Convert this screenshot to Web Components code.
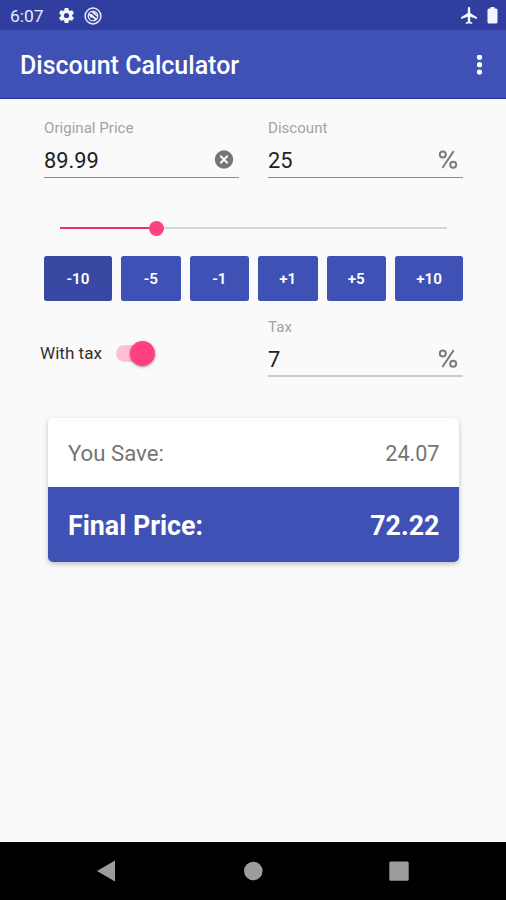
<!DOCTYPE html>
<html lang="en">
<head>
<meta charset="utf-8">
<title>Discount Calculator</title>
<style>
    body {
        margin: 0;
        background: #fafafa;
        font-family: Roboto, "Liberation Sans", sans-serif;
    }
</style>
</head>
<body>
<calculator-app></calculator-app>

<script>
class StatusBar extends HTMLElement {
    constructor() {
        super();
        this.attachShadow({mode: "open"}).innerHTML = `
        <style>
            :host {
                display: flex;
                align-items: center;
                box-sizing: border-box;
                height: 30px;
                padding: 1px 8px 0 10px;
                background: #303f9f;
                color: #e9ebf8;
                font-size: 17.4px;
            }
            svg { display: block; fill: #f4f5fd; }
            .gear { margin-left: 13px; }
            .ring { margin-left: 8.5px; }
            .plane { margin-left: auto; }
            .battery { margin-left: 10px; }
        </style>
        <span>6:07</span>
        <svg class="gear" width="19" height="19" viewBox="0 0 24 24"><path d="M19.14 12.94c.04-.3.06-.61.06-.94s-.02-.64-.07-.94l2.03-1.58c.18-.14.23-.41.12-.61l-1.92-3.32c-.12-.22-.37-.29-.59-.22l-2.39.96c-.5-.38-1.03-.7-1.62-.94l-.36-2.54c-.04-.24-.24-.41-.48-.41h-3.84c-.24 0-.43.17-.47.41l-.36 2.54c-.59.24-1.13.57-1.62.94l-2.39-.96c-.22-.08-.47 0-.59.22L2.74 8.87c-.12.21-.08.47.12.61l2.03 1.58c-.05.3-.09.63-.09.94s.02.64.07.94l-2.03 1.58c-.18.14-.23.41-.12.61l1.92 3.32c.12.22.37.29.59.22l2.39-.96c.5.38 1.03.7 1.62.94l.36 2.54c.05.24.24.41.48.41h3.84c.24 0 .44-.17.47-.41l.36-2.54c.59-.24 1.13-.56 1.62-.94l2.39.96c.22.08.47 0 .59-.22l1.92-3.32c.12-.22.07-.47-.12-.61l-2.01-1.58zM12 15.3a3.3 3.3 0 1 1 0-6.6 3.3 3.3 0 0 1 0 6.6z"/></svg>
        <svg class="ring" width="18" height="18" viewBox="0 0 18 18">
            <circle cx="9" cy="9" r="7.9" fill="none" stroke="#e9ebf8" stroke-width="1.5"/>
            <circle cx="9" cy="9" r="4.8" fill="none" stroke="#e9ebf8" stroke-width="1.3"/>
            <path d="M4.2 6.8 8 7.2l5.2 5.2-1.4 1.4-3.2-3.2-1.8.2z"/>
            <path d="M7 4.7h3l3 3v2z"/>
        </svg>
        <svg class="plane" width="16" height="17" viewBox="2 2 20 20" preserveAspectRatio="none"><path d="M22 16v-2l-8.5-5V3.5C13.5 2.67 12.83 2 12 2s-1.5.67-1.5 1.5V9L2 14v2l8.5-2.5V19L8 20.5V22l4-1 4 1v-1.5L13.5 19v-5.5z"/></svg>
        <svg class="battery" width="11" height="17" viewBox="0 0 11 17"><path d="M3.5 0h4v1.6H9q1.5 0 1.5 1.5V15q0 1.5-1.5 1.5H2Q.5 16.5.5 15V3.1Q.5 1.6 2 1.6h1.5z"/></svg>
        `;
    }
}

class AppBar extends HTMLElement {
    constructor() {
        super();
        this.attachShadow({mode: "open"}).innerHTML = `
        <style>
            :host {
                display: flex;
                align-items: center;
                justify-content: space-between;
                box-sizing: border-box;
                height: 69px;
                padding: 2px 23px 0 20px;
                background: #3f51b5;
                border-bottom: 1px solid #2135a4;
                color: #fff;
            }
            h1 { margin: 0; font-size: 25px; font-weight: 500; }
            svg { display: block; fill: #fff; }
        </style>
        <h1><slot></slot></h1>
        <svg width="7" height="21" viewBox="0 0 7 21">
            <circle cx="3.5" cy="2.3" r="2.6"/><circle cx="3.5" cy="9.7" r="2.6"/><circle cx="3.5" cy="17.1" r="2.6"/>
        </svg>
        `;
    }
}

class PriceField extends HTMLElement {
    constructor() {
        super();
        this.attachShadow({mode: "open"}).innerHTML = `
        <style>
            :host {
                display: block;
                width: 195px;
                height: 59px;
                color: #212121;
            }
            .label {
                height: 18px;
                line-height: 18px;
                font-size: 15.1px;
                color: #a3a3a3;
            }
            .row {
                display: flex;
                align-items: center;
                justify-content: space-between;
                box-sizing: border-box;
                height: 41px;
                padding: 5px 5px 0 0;
                border-bottom: 1px solid #8c8c8c;
                font-size: 21.8px;
            }
            .value { padding-top: 2px; }
            :host([disabled]) .row {
                padding-top: 6px;
                border-bottom: 2px solid #cacaca;
            }
        </style>
        <div class="label">${this.getAttribute("label")}</div>
        <div class="row"><span class="value">${this.getAttribute("value")}</span><slot></slot></div>
        `;
    }
}

class ClearIcon extends HTMLElement {
    constructor() {
        super();
        this.attachShadow({mode: "open"}).innerHTML = `
        <style>
            :host { display: block; }
            svg { display: block; }
        </style>
        <svg width="20" height="20" viewBox="0 0 20 20">
            <circle cx="10" cy="9.5" r="9.2" fill="#757575"/>
            <path d="M6.3 5.8l7.4 7.4M13.7 5.8l-7.4 7.4" stroke="#fafafa" stroke-width="2"/>
        </svg>
        `;
    }
}

class PercentIcon extends HTMLElement {
    constructor() {
        super();
        this.attachShadow({mode: "open"}).innerHTML = `
        <style>
            :host { display: block; }
            svg { display: block; fill: none; stroke: #7c7c7c; stroke-width: 2; }
        </style>
        <svg width="20" height="20" viewBox="0 0 20 20">
            <circle cx="4.8" cy="4.4" r="3"/>
            <circle cx="15.2" cy="14.7" r="3"/>
            <path d="M15.7 1.1 4.4 18"/>
        </svg>
        `;
    }
}

class DiscountSlider extends HTMLElement {
    constructor() {
        super();
        const value = this.getAttribute("value");
        this.attachShadow({mode: "open"}).innerHTML = `
        <style>
            :host { display: flex; align-items: center; height: 16px; }
            .filled { width: calc(${value}% - 7.5px); height: 2px; background: #e92f76; }
            .thumb { width: 15px; height: 15px; border-radius: 50%; background: #ff4081; }
            .rest { flex: 1; height: 2px; background: #d5d5d5; }
        </style>
        <div class="filled"></div><div class="thumb"></div><div class="rest"></div>
        `;
    }
}

class StepButton extends HTMLElement {
    constructor() {
        super();
        this.attachShadow({mode: "open"}).innerHTML = `
        <style>
            :host {
                display: flex;
                align-items: center;
                justify-content: center;
                flex: 1;
                box-sizing: border-box;
                height: 45px;
                padding-top: 1px;
                border-radius: 2.5px;
                background: #3f51b5;
                color: #fff;
                font-size: 15.2px;
                font-weight: 600;
            }
            :host([wide]) { flex: 0 0 68px; }
            :host([pressed]) { background: #3949a3; }
        </style>
        <slot></slot>
        `;
    }
}

class TaxSwitch extends HTMLElement {
    constructor() {
        super();
        this.attachShadow({mode: "open"}).innerHTML = `
        <style>
            :host {
                display: flex;
                align-items: center;
                color: #303030;
                font-size: 17.1px;
            }
            .track {
                display: flex;
                align-items: center;
                justify-content: flex-end;
                width: 36px;
                height: 17px;
                margin-left: 14.5px;
                border-radius: 9px;
                background: #ffbfd5;
            }
            .thumb {
                flex: none;
                width: 25px;
                height: 25px;
                margin-right: -2.5px;
                border-radius: 50%;
                background: #ff4081;
                box-shadow: 0 1px 3px rgba(0, 0, 0, 0.4);
            }
        </style>
        <span><slot></slot></span>
        <div class="track"><div class="thumb"></div></div>
        `;
    }
}

class ResultCard extends HTMLElement {
    constructor() {
        super();
        this.attachShadow({mode: "open"}).innerHTML = `
        <style>
            :host {
                display: block;
                border-radius: 5px;
                overflow: hidden;
                background: #fff;
                box-shadow: 0 2px 5px rgba(0, 0, 0, 0.24);
            }
            div {
                display: flex;
                align-items: center;
                justify-content: space-between;
                box-sizing: border-box;
                padding: 2px 19.5px 0 20px;
            }
            .save {
                height: 69px;
                padding-top: 1px;
                font-size: 22.2px;
                color: #757575;
            }
            .save .amount { font-size: 21.6px; }
            .final {
                height: 75px;
                padding-top: 3px;
                font-size: 26.8px;
                font-weight: 700;
                color: #fff;
                background: #3f51b5;
            }
        </style>
        <div class="save"><span>You Save:</span><span class="amount">${this.getAttribute("save")}</span></div>
        <div class="final"><span>Final Price:</span><span class="amount">${this.getAttribute("final")}</span></div>
        `;
    }
}

class NavBar extends HTMLElement {
    constructor() {
        super();
        this.attachShadow({mode: "open"}).innerHTML = `
        <style>
            :host {
                display: flex;
                align-items: center;
                justify-content: space-between;
                box-sizing: border-box;
                height: 58px;
                padding: 0 97px 0 96px;
                background: #000;
            }
            svg { display: block; fill: #9c9c9c; }
        </style>
        <svg width="20" height="22" viewBox="0 0 20 22"><path d="M1 11 19 .5v21z"/></svg>
        <svg width="20" height="20" viewBox="0 0 20 20"><circle cx="10.3" cy="10" r="9.3"/></svg>
        <svg width="20" height="20" viewBox="0 0 20 20"><rect x=".3" y=".5" width="19.4" height="19.2" rx="1.5"/></svg>
        `;
    }
}

class CalculatorApp extends HTMLElement {
    constructor() {
        super();
        this.attachShadow({mode: "open"}).innerHTML = `
        <style>
            :host {
                display: flex;
                flex-direction: column;
                height: 900px;
                overflow: hidden;
            }
            main { flex: 1; padding: 20px 43px 0 44px; }
            .fields { display: flex; justify-content: space-between; }
            discount-slider { margin: 42px 16px 0; }
            .steps { display: flex; gap: 9px; margin-top: 20px; }
            .tax { display: flex; justify-content: space-between; margin: 17px 0 0 -4px; }
            tax-switch { height: 70px; }
            result-card { margin: 30px 4px 0; }
        </style>
        <status-bar></status-bar>
        <app-bar>Discount Calculator</app-bar>
        <main>
            <div class="fields">
                <price-field label="Original Price" value="89.99"><clear-icon></clear-icon></price-field>
                <price-field label="Discount" value="25"><percent-icon></percent-icon></price-field>
            </div>
            <discount-slider value="25"></discount-slider>
            <div class="steps">
                <step-button wide pressed>-10</step-button>
                <step-button>-5</step-button>
                <step-button>-1</step-button>
                <step-button>+1</step-button>
                <step-button>+5</step-button>
                <step-button wide>+10</step-button>
            </div>
            <div class="tax">
                <tax-switch>With tax</tax-switch>
                <price-field label="Tax" value="7" disabled><percent-icon></percent-icon></price-field>
            </div>
            <result-card save="24.07" final="72.22"></result-card>
        </main>
        <nav-bar></nav-bar>
        `;
    }
}

customElements.define("status-bar", StatusBar);
customElements.define("app-bar", AppBar);
customElements.define("price-field", PriceField);
customElements.define("clear-icon", ClearIcon);
customElements.define("percent-icon", PercentIcon);
customElements.define("discount-slider", DiscountSlider);
customElements.define("step-button", StepButton);
customElements.define("tax-switch", TaxSwitch);
customElements.define("result-card", ResultCard);
customElements.define("nav-bar", NavBar);
customElements.define("calculator-app", CalculatorApp);
</script>
</body>
</html>
